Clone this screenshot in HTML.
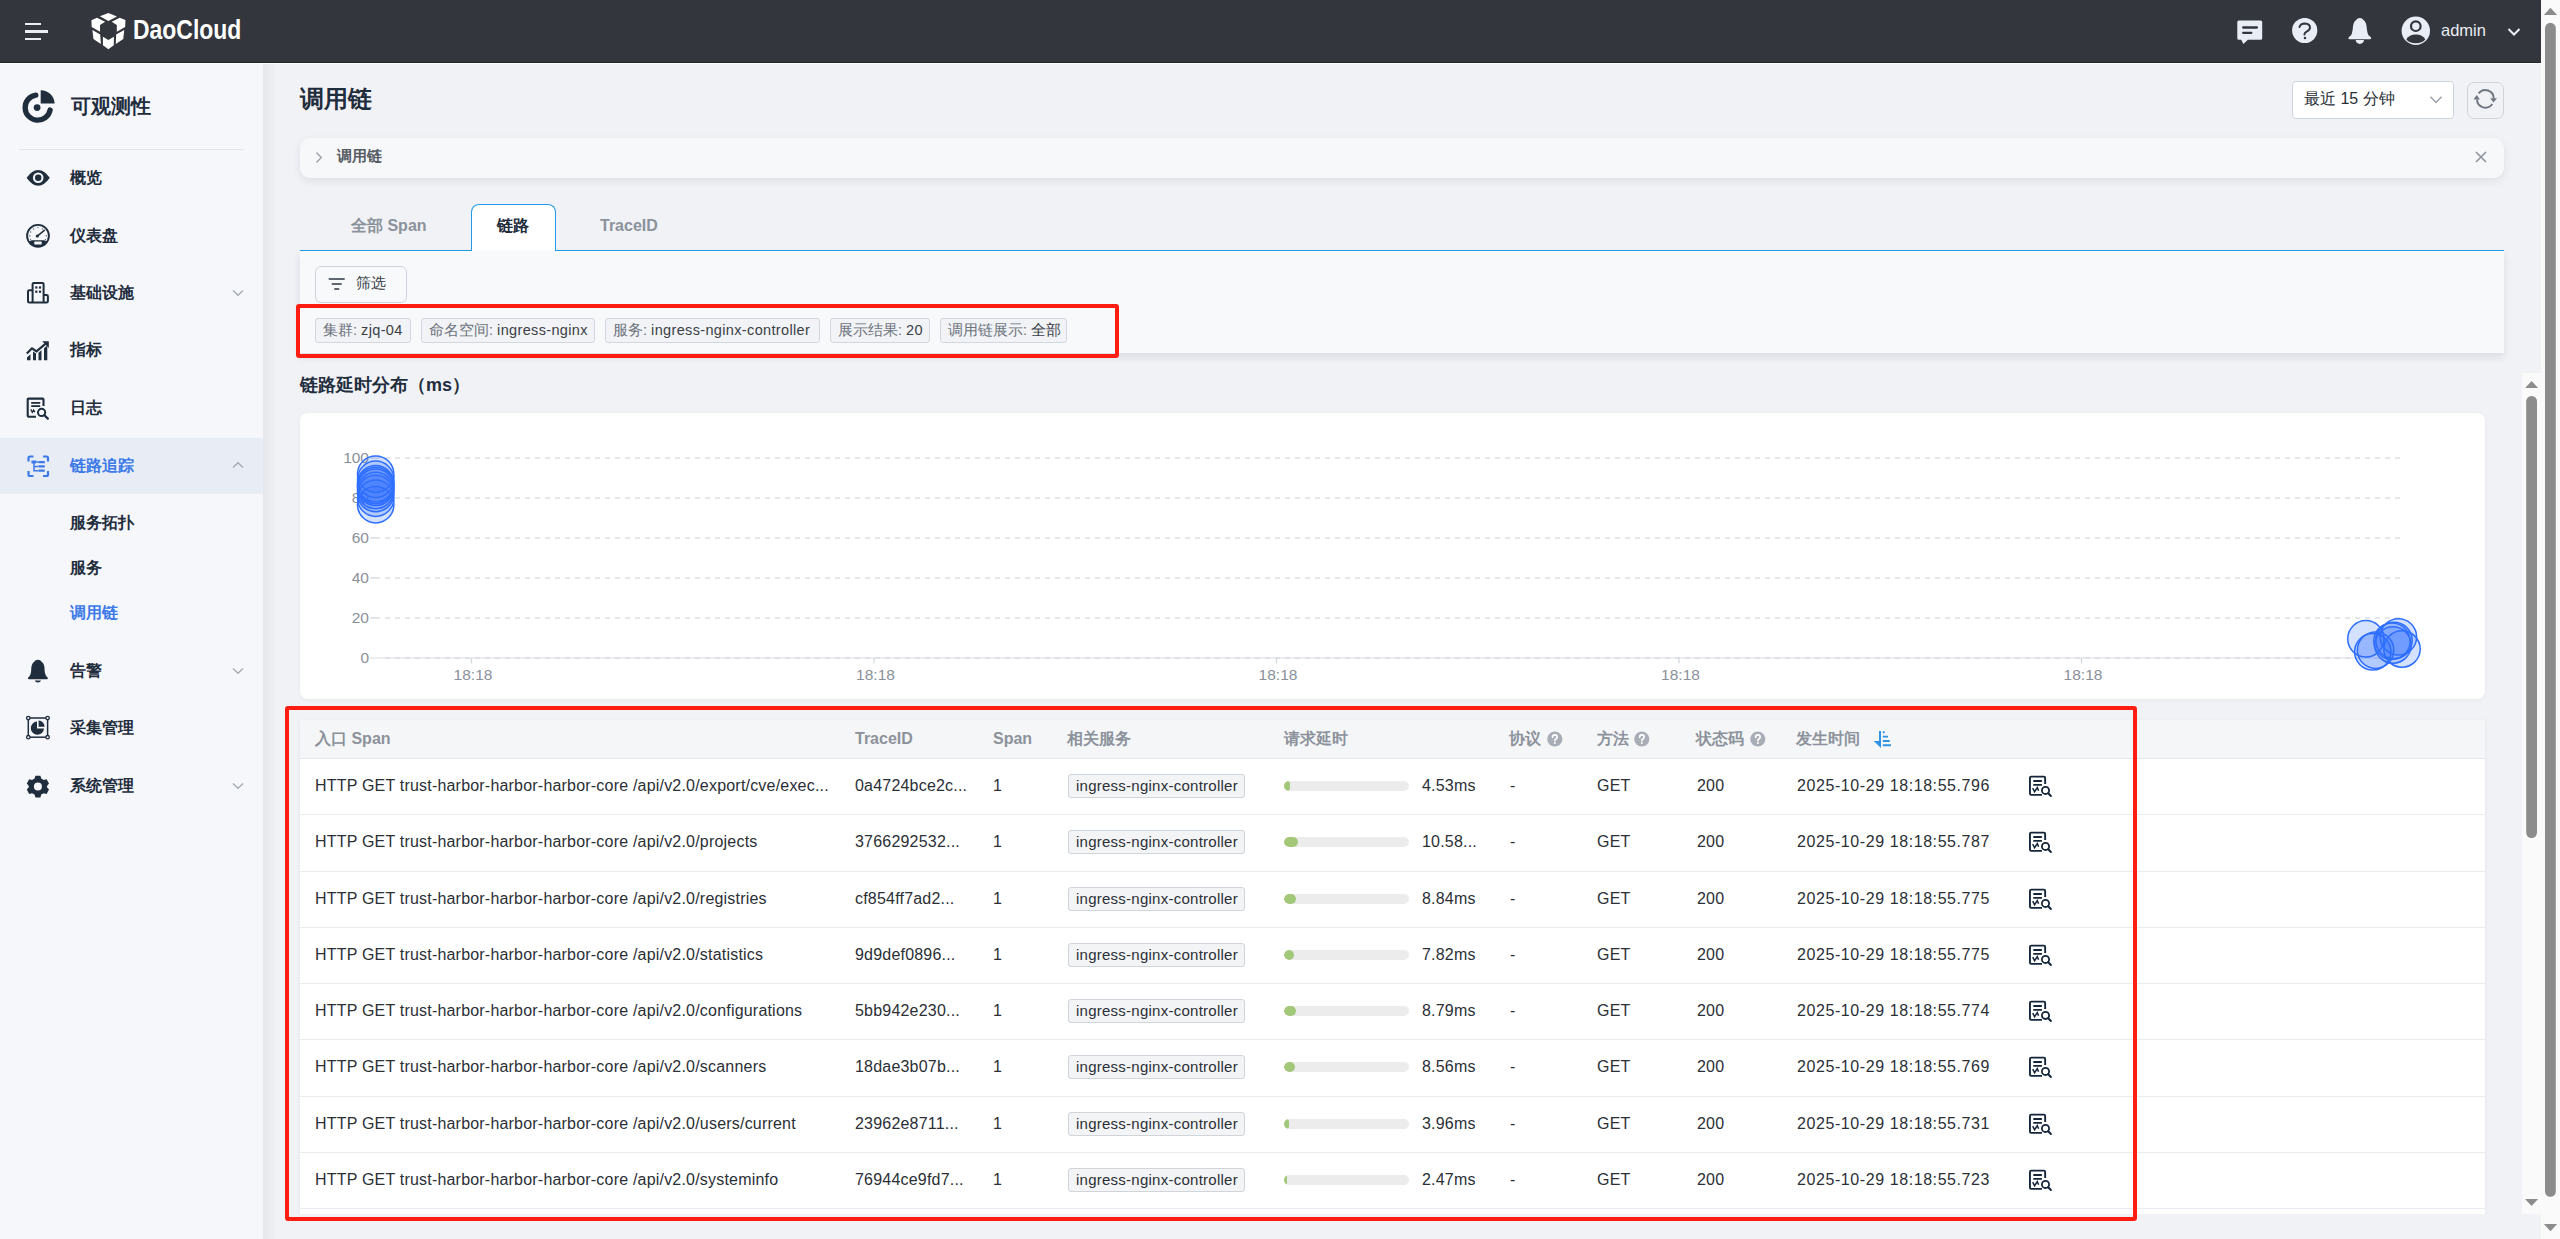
<!DOCTYPE html>
<html><head><meta charset="utf-8">
<style>
*{box-sizing:border-box;margin:0;padding:0}
html,body{width:2560px;height:1239px;overflow:hidden;background:#f1f2f6;font-family:"Liberation Sans",sans-serif;color:#2b2f36}
.a{position:absolute}
.nw{white-space:nowrap}
#top{left:0;top:0;width:2541px;height:63px;background:#33363c;border-bottom:1px solid #27292e}
#topw{left:0;top:63px;width:2541px;height:1px;background:#fdfdfe}
#side{left:0;top:64px;width:263px;height:1175px;background:#f6f7fb}
#sideshadow{left:263px;top:64px;width:14px;height:1177px;background:linear-gradient(90deg,rgba(0,0,0,0.045),rgba(0,0,0,0))}
.mi{left:70px;font-size:16px;font-weight:700;color:#1f2d3d;line-height:20px}
.ic{left:26px}
.chev{left:232px;width:12px;height:8px}
.tag{top:318px;height:25px;border:1px solid #d2d6dd;border-radius:3px;background:#f2f3f6;font-size:14.5px;line-height:23px;padding-left:7px;color:#6c727c}
.tag b{font-weight:400;color:#3a3f47;letter-spacing:0.35px}
.th{top:729px;font-size:16px;font-weight:700;color:#8c929b;line-height:20px}
.td{font-size:16px;color:#2b2f36;line-height:20px;letter-spacing:0.2px}
.dt{letter-spacing:0.58px}
.svc{width:177px;height:24px;border:1px solid #d0d4db;border-radius:3px;background:#f3f4f6;font-size:15px;line-height:22px;padding-left:7px;color:#2b2f36;letter-spacing:0.25px}
</style></head><body>
<!-- top bar -->
<div id="top" class="a">
  <div class="a" style="left:25px;top:23px;width:16px;height:2px;background:#e9edf5"></div>
  <div class="a" style="left:25px;top:30px;width:23px;height:2.5px;background:#e9edf5"></div>
  <div class="a" style="left:25px;top:38px;width:16px;height:2px;background:#e9edf5"></div>
  <svg class="a" style="left:88px;top:10px" width="42" height="42" viewBox="0 0 42 42">
    <g fill="#fff">
    <path d="M11.86 6.27 L20.34 2.88 L28.98 6.44 L20.34 11.02 Z"/>
    <path d="M3.39 10.17 L8.98 7.8 L17.12 11.69 L12.03 14.92 L12.03 21.86 L3.73 16.95 Z"/>
    <path d="M37.46 10 L31.69 7.8 L23.73 11.86 L28.81 15.08 L28.81 21.69 L37.12 16.95 Z"/>
    <path d="M4.41 20 L12.2 24.4 L12.88 34.07 L5.42 28.98 Z"/>
    <path d="M36.27 20 L28.14 24.4 L27.8 33.9 L35.25 28.98 Z"/>
    <path d="M14.92 26.78 L20.34 30 L25.93 26.78 L25.76 35.25 L20.34 39.32 L14.92 35.25 Z"/>
    </g>
  </svg>
  <div class="a nw" style="left:133px;top:15px;font-size:27px;font-weight:700;color:#fff;transform-origin:0 0;transform:scaleX(0.85);letter-spacing:0px">DaoCloud</div>
  <!-- right icons -->
  <svg class="a" style="left:2230px;top:12px" width="40" height="36" viewBox="0 0 40 36">
    <path fill="#e9edf5" d="M8.8 8.5 H30.6 Q32.2 8.5 32.2 10.1 V26.2 Q32.2 27.8 30.6 27.8 H17.9 L13.4 32 L11.2 27.8 H8.8 Q7.3 27.8 7.3 26.2 V10.1 Q7.3 8.5 8.8 8.5 Z"/>
    <path d="M13.2 15.5 H26.9 M13.2 20.8 H21.3" stroke="#32353b" stroke-width="2.3" stroke-linecap="round"/>
  </svg>
  <svg class="a" style="left:2292px;top:18px" width="26" height="26" viewBox="0 0 26 26">
    <circle cx="12.7" cy="12.5" r="12.6" fill="#e9edf5"/>
    <path d="M7.5 9 Q8.5 5.4 13 5.4 Q18 5.6 18 9.6 Q18 12 14.6 13.6 Q12.4 14.8 12.4 16.6" stroke="#32353b" stroke-width="2" fill="none" stroke-linecap="round"/>
    <circle cx="13" cy="19.9" r="1.25" fill="#32353b"/>
  </svg>
  <svg class="a" style="left:2345px;top:16px" width="30" height="30" viewBox="0 0 30 30">
    <path fill="#e9edf5" d="M14.8 1.9 Q17.3 1.9 18.4 4 Q21.1 5.6 21.6 10.5 Q22.1 16.9 23.5 19.2 Q26.5 21.6 26.3 22.3 Q26 23.2 25 23.2 H4.6 Q3.6 23.2 3.3 22.3 Q3.1 21.6 6.1 19.2 Q7.5 16.9 8 10.5 Q8.5 5.6 11.2 4 Q12.3 1.9 14.8 1.9 Z M10.7 24.1 H19 Q18.6 27.9 14.85 27.9 Q11.1 27.9 10.7 24.1 Z"/>
  </svg>
  <svg class="a" style="left:2401px;top:16px" width="30" height="30" viewBox="0 0 30 30">
    <circle cx="14.8" cy="14.8" r="14.2" fill="#e9edf5"/>
    <circle cx="14.8" cy="10.2" r="4.8" fill="none" stroke="#32353b" stroke-width="2.2"/>
    <path d="M5.3 23.5 Q8 18.5 14.8 18.5 Q21.6 18.5 24.3 23.5 Q21 27.3 14.8 27.3 Q8.6 27.3 5.3 23.5 Z" fill="#32353b"/>
  </svg>
  <div class="a nw" style="left:2441px;top:21px;font-size:16.5px;color:#e9edf5">admin</div>
  <svg class="a" style="left:2507px;top:27px" width="14" height="10" viewBox="0 0 14 10">
    <path d="M1.5 2 L7 7.5 L12.5 2" stroke="#e9edf5" stroke-width="2" fill="none"/>
  </svg>
</div>

<div id="topw" class="a"></div>
<!-- sidebar -->
<div id="side" class="a"></div>
<!-- obs logo -->
<svg class="a" style="left:20px;top:88px" width="38" height="38" viewBox="20 88 38 38">
  <path d="M50.1 110 A12.6 12.6 0 1 1 35.8 95.1" fill="none" stroke="#1f2d3d" stroke-width="5.3" stroke-linecap="round"/>
  <path d="M40.7 90.2 A13.8 13.8 0 0 1 54.6 103.6 L40.7 103.6 Z" fill="#1f2d3d"/>
  <circle cx="37.1" cy="107.6" r="3.4" fill="#1f2d3d"/>
</svg>
<div class="a nw" style="left:71px;top:94px;font-size:20px;font-weight:700;color:#1f2d3d;line-height:24px">可观测性</div>
<div class="a" style="left:19px;top:149px;width:225px;height:1px;background:#e2e5eb"></div>

<!-- eye -->
<svg class="a" style="left:26px;top:169px" width="25" height="18" viewBox="0 0 25 18">
  <path d="M0.6 8.8 Q6 0.9 12.2 0.9 Q18.4 0.9 23.8 8.8 Q18.4 16.7 12.2 16.7 Q6 16.7 0.6 8.8 Z" fill="#1f2d3d"/>
  <circle cx="12.2" cy="8.8" r="5.3" fill="#f5f6fa"/>
  <circle cx="12.2" cy="8.8" r="3.2" fill="#1f2d3d"/>
</svg>
<div class="a mi nw" style="top:168px">概览</div>

<!-- gauge -->
<svg class="a" style="left:25px;top:223px" width="26" height="26" viewBox="0 0 26 26">
  <circle cx="13" cy="12.8" r="10.9" fill="none" stroke="#1f2d3d" stroke-width="1.9"/>
  <path d="M4.3 19.3 Q5 17.2 7 17.2 H19 Q21 17.2 21.7 19.3 Q18.5 23.7 13 23.7 Q7.5 23.7 4.3 19.3 Z" fill="#1f2d3d"/>
  <rect x="9.3" y="18.6" width="7.4" height="3" rx="0.6" fill="#f5f6fa"/>
  <path d="M12 13.3 L19.3 7.3" stroke="#1f2d3d" stroke-width="1.5" stroke-linecap="round"/>
  <circle cx="12.3" cy="13" r="1.6" fill="#1f2d3d"/>
  <g fill="#1f2d3d" opacity="0.75"><circle cx="13" cy="4.6" r="0.7"/><circle cx="8.6" cy="5.9" r="0.7"/><circle cx="5.8" cy="9" r="0.7"/><circle cx="4.8" cy="12.8" r="0.7"/><circle cx="21.2" cy="12.8" r="0.7"/><circle cx="17.4" cy="5.9" r="0.7"/><circle cx="5.5" cy="16.3" r="0.6"/><circle cx="20.5" cy="16.3" r="0.6"/></g>
</svg>
<div class="a mi nw" style="top:226px">仪表盘</div>

<!-- building -->
<svg class="a" style="left:26px;top:281px" width="24" height="24" viewBox="0 0 24 24">
  <path d="M6.6 21.4 V3.1 Q6.6 1.9 7.8 1.9 H16.4 Q17.6 1.9 17.6 3.1 V21.4 M6.6 9.2 H3.3 Q2 9.2 2 10.5 V20.2 Q2 21.4 3.3 21.4 H20.6 Q21.9 21.4 21.9 20.2 V15.2 Q21.9 14 20.6 14 H17.6" fill="none" stroke="#1f2d3d" stroke-width="2"/>
  <rect x="9.2" y="5.4" width="2.2" height="2.2" fill="#1f2d3d"/><rect x="12.9" y="5.4" width="2.2" height="2.2" fill="#1f2d3d"/>
  <rect x="9.2" y="9.6" width="2.2" height="2.2" fill="#1f2d3d"/><rect x="12.9" y="9.6" width="2.2" height="2.2" fill="#1f2d3d"/>
</svg>
<div class="a mi nw" style="top:283px">基础设施</div>
<svg class="a chev" style="top:289px" viewBox="0 0 12 8"><path d="M1 1.5 L6 6.3 L11 1.5" fill="none" stroke="#a4aab3" stroke-width="1.3"/></svg>

<!-- metric -->
<svg class="a" style="left:26px;top:340px" width="24" height="22" viewBox="0 0 24 22">
  <path d="M0.8 13.6 L6 8.3 L10.5 11.3 L20 3.4" fill="none" stroke="#1f2d3d" stroke-width="2.2"/>
  <path d="M16.2 1.3 H22.8 V7.9 Z" fill="#1f2d3d"/>
  <path d="M1 20.3 L1 17.6 L4.5 14.2 V20.3 Z M7 20.3 V11.6 L10 13.6 V20.3 Z M12.5 20.3 V12.8 L15.5 10.3 V20.3 Z M18 20.3 V8.3 L21.3 5.5 V20.3 Z" fill="#1f2d3d"/>
</svg>
<div class="a mi nw" style="top:340px">指标</div>

<!-- log -->
<svg class="a" style="left:26px;top:397px" width="25" height="23" viewBox="0 0 25 23">
  <path d="M10 19.7 H2.6 Q1.7 19.7 1.7 18.8 V2.5 Q1.7 1.6 2.6 1.6 H16.6 Q17.5 1.6 17.5 2.5 V9" fill="none" stroke="#1f2d3d" stroke-width="2.1"/>
  <rect x="5.2" y="5" width="9" height="1.8" fill="#1f2d3d"/><rect x="5.2" y="8.2" width="9" height="1.8" fill="#1f2d3d"/>
  <path d="M4.8 12.3 L6.3 15.3 L7.6 13 L8.9 15.3" fill="none" stroke="#1f2d3d" stroke-width="1.3"/>
  <circle cx="15.6" cy="15.4" r="3.6" fill="none" stroke="#1f2d3d" stroke-width="2"/>
  <path d="M18.2 18 L21.8 21.6" stroke="#1f2d3d" stroke-width="2.2" stroke-linecap="round"/>
</svg>
<div class="a mi nw" style="top:398px">日志</div>

<!-- active trace -->
<div class="a" style="left:0;top:438px;width:263px;height:56px;background:#e8ecf4"></div>
<svg class="a" style="left:27px;top:455px" width="23" height="23" viewBox="0 0 23 23">
  <g fill="none" stroke="#3b7ae8" stroke-width="2.2">
  <path d="M1.5 6.5 V3 Q1.5 1.5 3 1.5 H6.5 M16 1.5 H19.5 Q21 1.5 21 3 V6.5 M21 16 V19.5 Q21 21 19.5 21 H16 M6.5 21 H3 Q1.5 21 1.5 19.5 V16"/>
  </g>
  <g fill="#3b7ae8">
  <rect x="4.4" y="5.6" width="5" height="2.8" rx="0.6"/>
  <rect x="11.5" y="6" width="6.3" height="2.2" rx="0.5"/>
  <rect x="11.5" y="10.3" width="6.3" height="2.2" rx="0.5"/>
  <rect x="11.5" y="14.6" width="6.3" height="2.2" rx="0.5"/>
  </g>
  <path d="M7 8 V15.7 H11.5 M7 11.4 H11.5 M9.4 7 H11.5" fill="none" stroke="#3b7ae8" stroke-width="1.5"/>
</svg>
<div class="a mi nw" style="top:456px;color:#3b7ae8">链路追踪</div>
<svg class="a chev" style="top:461px" viewBox="0 0 12 8"><path d="M1 6.5 L6 1.7 L11 6.5" fill="none" stroke="#a4aab3" stroke-width="1.3"/></svg>

<div class="a mi nw" style="top:513px">服务拓扑</div>
<div class="a mi nw" style="top:558px">服务</div>
<div class="a mi nw" style="top:603px;color:#3b7ae8">调用链</div>

<!-- bell -->
<svg class="a" style="left:26px;top:658px" width="24" height="26" viewBox="0 0 24 26">
  <path d="M11.9 1.7 Q14.6 1.7 15.6 3.8 Q18.6 6 18.6 11.7 Q18.6 17.2 21.6 19.4 Q22.5 20.8 21 21.3 H2.8 Q1.3 20.8 2.2 19.4 Q5.2 17.2 5.2 11.7 Q5.2 6 8.2 3.8 Q9.2 1.7 11.9 1.7 Z M8.8 22.5 H15 Q14.5 24.6 11.9 24.6 Q9.3 24.6 8.8 22.5 Z" fill="#1f2d3d"/>
</svg>
<div class="a mi nw" style="top:661px">告警</div>
<svg class="a chev" style="top:667px" viewBox="0 0 12 8"><path d="M1 1.5 L6 6.3 L11 1.5" fill="none" stroke="#a4aab3" stroke-width="1.3"/></svg>

<!-- collect -->
<svg class="a" style="left:25px;top:715px" width="26" height="26" viewBox="0 0 26 26">
  <rect x="3.3" y="3" width="19.3" height="19.2" fill="none" stroke="#1f2d3d" stroke-width="1.5"/>
  <g fill="#f5f6fa" stroke="#1f2d3d" stroke-width="1.3"><circle cx="3.3" cy="3" r="1.7"/><circle cx="22.6" cy="3" r="1.7"/><circle cx="3.3" cy="22.2" r="1.7"/><circle cx="22.6" cy="22.2" r="1.7"/></g>
  <path d="M12 6.5 A6.6 6.6 0 1 0 19 13.4 H12 Z" fill="#1f2d3d"/>
  <path d="M13.6 5.6 A6 6 0 0 1 19.6 11.7 H13.6 Z" fill="#1f2d3d"/>
</svg>
<div class="a mi nw" style="top:718px">采集管理</div>

<!-- gear -->
<svg class="a" style="left:26px;top:774px" width="24" height="24" viewBox="0 0 24 24">
  <path fill="#1f2d3d" fill-rule="evenodd" d="M9.4 1.8 H14.4 L15.2 4.6 L17.8 6 L20.6 5.3 L23 9.6 L21 11.9 V13.3 L23 15.6 L20.6 19.9 L17.8 19.2 L15.2 20.6 L14.4 23.4 H9.4 L8.6 20.6 L6 19.2 L3.2 19.9 L0.8 15.6 L2.8 13.3 V11.9 L0.8 9.6 L3.2 5.3 L6 6 L8.6 4.6 Z M11.9 8.6 A4 4 0 1 0 11.9 16.6 A4 4 0 1 0 11.9 8.6 Z"/>
</svg>
<div class="a mi nw" style="top:776px">系统管理</div>
<svg class="a chev" style="top:782px" viewBox="0 0 12 8"><path d="M1 1.5 L6 6.3 L11 1.5" fill="none" stroke="#a4aab3" stroke-width="1.3"/></svg>

<!-- main header -->
<div class="a nw" style="left:300px;top:84px;font-size:24px;font-weight:700;color:#1f2d3d;line-height:30px">调用链</div>
<div class="a" style="left:2292px;top:81px;width:162px;height:38px;background:#fff;border:1px solid #cfd3db;border-radius:4px"></div>
<div class="a nw" style="left:2304px;top:89px;font-size:16px;color:#2b2f36;line-height:20px">最近 15 分钟</div>
<svg class="a" style="left:2429px;top:95px" width="14" height="10" viewBox="0 0 14 10"><path d="M1.5 1.8 L7 7.5 L12.5 1.8" fill="none" stroke="#9aa0a9" stroke-width="1.4"/></svg>
<div class="a" style="left:2467px;top:82px;width:37px;height:37px;border:1px solid #cfd3db;border-radius:7px"></div>
<svg class="a" style="left:2465px;top:80px" width="42" height="42" viewBox="0 0 42 42">
  <path d="M13.6 13.4 A8.4 8.4 0 0 1 28.7 18.6" fill="none" stroke="#6f7680" stroke-width="1.9"/>
  <path d="M27.3 24 A8.4 8.4 0 0 1 12 19.6" fill="none" stroke="#6f7680" stroke-width="1.9"/>
  <path d="M25.2 18.3 H32 L28.5 22.5 Z" fill="#6f7680"/>
  <path d="M8.5 19.6 H14.9 L11.7 15.1 Z" fill="#6f7680"/>
</svg>

<!-- breadcrumb -->
<div class="a" style="left:300px;top:138px;width:2204px;height:40px;background:#f7f8fa;border-radius:10px;box-shadow:0 3px 9px rgba(30,40,60,0.09)"></div>
<svg class="a" style="left:314px;top:151px" width="10" height="13" viewBox="0 0 10 13"><path d="M2.5 1.5 L7.3 6.5 L2.5 11.5" fill="none" stroke="#9aa0a9" stroke-width="1.3"/></svg>
<div class="a nw" style="left:337px;top:147px;font-size:15px;font-weight:700;color:#575c64;line-height:18px">调用链</div>
<svg class="a" style="left:2474px;top:150px" width="14" height="14" viewBox="0 0 14 14"><path d="M2 2 L12 12 M12 2 L2 12" stroke="#8c929b" stroke-width="1.5"/></svg>

<!-- tabs -->
<div class="a" style="left:300px;top:250px;width:2204px;height:1px;background:#239ae9"></div>
<div class="a" style="left:471px;top:204px;width:85px;height:47px;background:#fff;border:1px solid #239ae9;border-bottom:none;border-radius:8px 8px 0 0"></div>
<div class="a nw" style="left:351px;top:216px;font-size:16px;font-weight:700;color:#8c929b;line-height:20px">全部 Span</div>
<div class="a nw" style="left:497px;top:216px;font-size:16px;font-weight:700;color:#1f2d3d;line-height:20px">链路</div>
<div class="a nw" style="left:600px;top:216px;font-size:16px;font-weight:700;color:#8c929b;line-height:20px">TraceID</div>

<!-- filter panel -->
<div class="a" style="left:300px;top:251px;width:2204px;height:102px;background:#f8f9fb;box-shadow:0 4px 8px rgba(20,30,50,0.10)"></div>
<div class="a" style="left:315px;top:266px;width:92px;height:37px;border:1px solid #cfd3db;border-radius:6px;background:#f8f9fb"></div>
<svg class="a" style="left:328px;top:276px" width="18" height="16" viewBox="0 0 18 16"><path d="M1.5 3 H16 M4.5 8 H13 M7 13 H10.5" stroke="#5f6670" stroke-width="1.9" stroke-linecap="round"/></svg>
<div class="a nw" style="left:356px;top:274px;font-size:15px;color:#3a3f47;line-height:18px">筛选</div>

<div class="a tag nw" style="left:315px;width:96px">集群: <b>zjq-04</b></div>
<div class="a tag nw" style="left:421px;width:174px">命名空间: <b>ingress-nginx</b></div>
<div class="a tag nw" style="left:605px;width:215px">服务: <b>ingress-nginx-controller</b></div>
<div class="a tag nw" style="left:830px;width:100px">展示结果: <b>20</b></div>
<div class="a tag nw" style="left:940px;width:127px">调用链展示: <b>全部</b></div>

<!-- annotations -->
<div class="a" style="left:296px;top:304px;width:823px;height:54px;border:4px solid #ff1d12;border-radius:3px"></div>

<!-- chart -->
<div class="a nw" style="left:300px;top:374px;font-size:18px;font-weight:700;color:#1f2d3d;line-height:22px">链路延时分布（ms）</div>
<div class="a" style="left:300px;top:413px;width:2185px;height:286px;background:#fff;border-radius:8px;box-shadow:0 1px 4px rgba(30,40,60,0.05)"></div>
<svg class="a" style="left:300px;top:413px" width="2185" height="286" viewBox="300 413 2185 286">
<g font-family="Liberation Sans" font-size="15.5" fill="#8a9099">
<path d="M370 458 H380" stroke="#dcdfe6" stroke-width="1.6"/><path d="M385 458 H2400" stroke="#dcdfe6" stroke-width="1.6" stroke-dasharray="5 5"/>
<text x="369" y="462.5" text-anchor="end">100</text>
<path d="M370 498 H380" stroke="#dcdfe6" stroke-width="1.6"/><path d="M385 498 H2400" stroke="#dcdfe6" stroke-width="1.6" stroke-dasharray="5 5"/>
<text x="369" y="502.5" text-anchor="end">80</text>
<path d="M370 538 H380" stroke="#dcdfe6" stroke-width="1.6"/><path d="M385 538 H2400" stroke="#dcdfe6" stroke-width="1.6" stroke-dasharray="5 5"/>
<text x="369" y="542.5" text-anchor="end">60</text>
<path d="M370 578 H380" stroke="#dcdfe6" stroke-width="1.6"/><path d="M385 578 H2400" stroke="#dcdfe6" stroke-width="1.6" stroke-dasharray="5 5"/>
<text x="369" y="582.5" text-anchor="end">40</text>
<path d="M370 618 H380" stroke="#dcdfe6" stroke-width="1.6"/><path d="M385 618 H2400" stroke="#dcdfe6" stroke-width="1.6" stroke-dasharray="5 5"/>
<text x="369" y="622.5" text-anchor="end">20</text>
<path d="M370 658 H2400" stroke="#e6e8ed" stroke-width="1.6"/><path d="M385 658 H2400" stroke="#d9dce3" stroke-width="1.6" stroke-dasharray="5 5"/>
<text x="369" y="662.5" text-anchor="end">0</text>
<path d="M471.5 658 V663.5" stroke="#d5d8df" stroke-width="1.3"/><text x="473.0" y="680" text-anchor="middle">18:18</text>
<path d="M874.0 658 V663.5" stroke="#d5d8df" stroke-width="1.3"/><text x="875.5" y="680" text-anchor="middle">18:18</text>
<path d="M1276.5 658 V663.5" stroke="#d5d8df" stroke-width="1.3"/><text x="1278.0" y="680" text-anchor="middle">18:18</text>
<path d="M1679.0 658 V663.5" stroke="#d5d8df" stroke-width="1.3"/><text x="1680.5" y="680" text-anchor="middle">18:18</text>
<path d="M2081.5 658 V663.5" stroke="#d5d8df" stroke-width="1.3"/><text x="2083.0" y="680" text-anchor="middle">18:18</text>

</g>
<g fill="rgba(45,110,255,0.2)" stroke="#2f6fff" stroke-width="1.5"><circle cx="375.7" cy="474.2" r="18.2"/><circle cx="375.7" cy="479.3" r="18.2"/><circle cx="375.7" cy="483.6" r="18.2"/><circle cx="375.7" cy="487.3" r="18.2"/><circle cx="375.7" cy="485.5" r="18.2"/><circle cx="375.7" cy="490.5" r="18.2"/><circle cx="375.7" cy="493.5" r="18.2"/><circle cx="375.7" cy="498.2" r="18.2"/><circle cx="375.7" cy="504.7" r="18.2"/><circle cx="2365.9" cy="638.8" r="18.2"/><circle cx="2372.8" cy="651.8" r="18.2"/><circle cx="2375.6" cy="650.2" r="18.2"/><circle cx="2391.9" cy="641.2" r="18.2"/><circle cx="2394" cy="640.5" r="18.2"/><circle cx="2398.4" cy="636.9" r="18.2"/><circle cx="2402" cy="649" r="18.2"/><circle cx="2393" cy="645" r="18.2"/></g>
</svg>

<!-- table -->
<div class="a" style="left:263px;top:373px;width:2259px;height:841px;overflow:hidden">
<div class="a" style="left:37px;top:347px;width:2185px;height:520px;background:#fff;box-shadow:0 1px 4px rgba(30,40,60,0.06)"></div>
</div>
<div class="a" style="left:300px;top:720px;width:2185px;height:39px;background:#f5f6f8;border-bottom:1px solid #e4e7ec"></div>
<div class="a th nw" style="left:315px">入口 Span</div>
<div class="a th nw" style="left:855px">TraceID</div>
<div class="a th nw" style="left:993px">Span</div>
<div class="a th nw" style="left:1067px">相关服务</div>
<div class="a th nw" style="left:1284px">请求延时</div>
<div class="a th nw" style="left:1509px">协议</div>
<div class="a th nw" style="left:1597px">方法</div>
<div class="a th nw" style="left:1696px">状态码</div>
<div class="a th nw" style="left:1796px">发生时间</div>
<svg class="a" style="left:1547px;top:731px" width="16" height="16" viewBox="0 0 16 16"><circle cx="7.8" cy="8" r="7.6" fill="#a9aeb6"/><path d="M5.6 6.3 Q5.6 3.9 7.9 3.9 Q10.2 3.9 10.2 6 Q10.2 7.2 8.8 8 Q7.9 8.6 7.9 9.6" fill="none" stroke="#fff" stroke-width="1.7" stroke-linecap="round"/><circle cx="7.9" cy="12" r="1" fill="#fff"/></svg>
<svg class="a" style="left:1634px;top:731px" width="16" height="16" viewBox="0 0 16 16"><circle cx="7.8" cy="8" r="7.6" fill="#a9aeb6"/><path d="M5.6 6.3 Q5.6 3.9 7.9 3.9 Q10.2 3.9 10.2 6 Q10.2 7.2 8.8 8 Q7.9 8.6 7.9 9.6" fill="none" stroke="#fff" stroke-width="1.7" stroke-linecap="round"/><circle cx="7.9" cy="12" r="1" fill="#fff"/></svg>
<svg class="a" style="left:1750px;top:731px" width="16" height="16" viewBox="0 0 16 16"><circle cx="7.8" cy="8" r="7.6" fill="#a9aeb6"/><path d="M5.6 6.3 Q5.6 3.9 7.9 3.9 Q10.2 3.9 10.2 6 Q10.2 7.2 8.8 8 Q7.9 8.6 7.9 9.6" fill="none" stroke="#fff" stroke-width="1.7" stroke-linecap="round"/><circle cx="7.9" cy="12" r="1" fill="#fff"/></svg>
<svg class="a" style="left:1870px;top:728px" width="24" height="22" viewBox="0 0 24 22"><path d="M9 3 H11 V19.9 L3.7 13 H9 Z" fill="#2f94e6"/><path d="M12.8 4.2 H14.7 M12.8 8.6 H18 M12.8 13 H19.7 M12.8 17.3 H21" stroke="#2f94e6" stroke-width="1.9"/></svg>
<div class="a" style="left:300px;top:814.25px;width:2185px;height:1px;background:#e9ebef"></div>
<div class="a td nw" style="left:315px;top:776.00px">HTTP GET trust-harbor-harbor-harbor-core /api/v2.0/export/cve/exec...</div>
<div class="a td nw" style="left:855px;top:776.00px">0a4724bce2c...</div>
<div class="a td nw" style="left:993px;top:776.00px">1</div>
<div class="a svc nw" style="left:1068px;top:774.00px">ingress-nginx-controller</div>
<div class="a" style="left:1284px;top:781.00px;width:125px;height:10px;border-radius:5px;background:#ececec;overflow:hidden"><div style="width:6px;height:10px;border-radius:5px;background:#a3c87a"></div></div>
<div class="a td nw" style="left:1422px;top:776.00px">4.53ms</div>
<div class="a td nw" style="left:1510px;top:776.00px">-</div>
<div class="a td nw" style="left:1597px;top:776.00px">GET</div>
<div class="a td nw" style="left:1697px;top:776.00px">200</div>
<div class="a td dt nw" style="left:1797px;top:776.00px">2025-10-29 18:18:55.796</div>
<svg class="a" style="left:2020px;top:770.00px" width="34" height="30" viewBox="0 0 34 30"><path d="M22 24.85 H11.2 Q9.95 24.85 9.95 23.6 V7.9 Q9.95 6.65 11.2 6.65 H23.9 Q25.15 6.65 25.15 7.9 V14" fill="none" stroke="#15263b" stroke-width="1.9"/><path d="M14 11 H21.2 M14 14.9 H21.2" stroke="#15263b" stroke-width="1.9" stroke-linecap="round"/><path d="M12.7 18.1 L14.6 21.7 L17.3 17.6 L18.6 20.7" fill="none" stroke="#15263b" stroke-width="1.5"/><circle cx="25.5" cy="20.4" r="3.6" fill="none" stroke="#15263b" stroke-width="1.8"/><path d="M28.2 23.2 L30.9 26" stroke="#15263b" stroke-width="2" stroke-linecap="round"/></svg>
<div class="a" style="left:300px;top:870.50px;width:2185px;height:1px;background:#e9ebef"></div>
<div class="a td nw" style="left:315px;top:832.25px">HTTP GET trust-harbor-harbor-harbor-core /api/v2.0/projects</div>
<div class="a td nw" style="left:855px;top:832.25px">3766292532...</div>
<div class="a td nw" style="left:993px;top:832.25px">1</div>
<div class="a svc nw" style="left:1068px;top:830.25px">ingress-nginx-controller</div>
<div class="a" style="left:1284px;top:837.25px;width:125px;height:10px;border-radius:5px;background:#ececec;overflow:hidden"><div style="width:14.2px;height:10px;border-radius:5px;background:#a3c87a"></div></div>
<div class="a td nw" style="left:1422px;top:832.25px">10.58...</div>
<div class="a td nw" style="left:1510px;top:832.25px">-</div>
<div class="a td nw" style="left:1597px;top:832.25px">GET</div>
<div class="a td nw" style="left:1697px;top:832.25px">200</div>
<div class="a td dt nw" style="left:1797px;top:832.25px">2025-10-29 18:18:55.787</div>
<svg class="a" style="left:2020px;top:826.25px" width="34" height="30" viewBox="0 0 34 30"><path d="M22 24.85 H11.2 Q9.95 24.85 9.95 23.6 V7.9 Q9.95 6.65 11.2 6.65 H23.9 Q25.15 6.65 25.15 7.9 V14" fill="none" stroke="#15263b" stroke-width="1.9"/><path d="M14 11 H21.2 M14 14.9 H21.2" stroke="#15263b" stroke-width="1.9" stroke-linecap="round"/><path d="M12.7 18.1 L14.6 21.7 L17.3 17.6 L18.6 20.7" fill="none" stroke="#15263b" stroke-width="1.5"/><circle cx="25.5" cy="20.4" r="3.6" fill="none" stroke="#15263b" stroke-width="1.8"/><path d="M28.2 23.2 L30.9 26" stroke="#15263b" stroke-width="2" stroke-linecap="round"/></svg>
<div class="a" style="left:300px;top:926.75px;width:2185px;height:1px;background:#e9ebef"></div>
<div class="a td nw" style="left:315px;top:888.50px">HTTP GET trust-harbor-harbor-harbor-core /api/v2.0/registries</div>
<div class="a td nw" style="left:855px;top:888.50px">cf854ff7ad2...</div>
<div class="a td nw" style="left:993px;top:888.50px">1</div>
<div class="a svc nw" style="left:1068px;top:886.50px">ingress-nginx-controller</div>
<div class="a" style="left:1284px;top:893.50px;width:125px;height:10px;border-radius:5px;background:#ececec;overflow:hidden"><div style="width:11.7px;height:10px;border-radius:5px;background:#a3c87a"></div></div>
<div class="a td nw" style="left:1422px;top:888.50px">8.84ms</div>
<div class="a td nw" style="left:1510px;top:888.50px">-</div>
<div class="a td nw" style="left:1597px;top:888.50px">GET</div>
<div class="a td nw" style="left:1697px;top:888.50px">200</div>
<div class="a td dt nw" style="left:1797px;top:888.50px">2025-10-29 18:18:55.775</div>
<svg class="a" style="left:2020px;top:882.50px" width="34" height="30" viewBox="0 0 34 30"><path d="M22 24.85 H11.2 Q9.95 24.85 9.95 23.6 V7.9 Q9.95 6.65 11.2 6.65 H23.9 Q25.15 6.65 25.15 7.9 V14" fill="none" stroke="#15263b" stroke-width="1.9"/><path d="M14 11 H21.2 M14 14.9 H21.2" stroke="#15263b" stroke-width="1.9" stroke-linecap="round"/><path d="M12.7 18.1 L14.6 21.7 L17.3 17.6 L18.6 20.7" fill="none" stroke="#15263b" stroke-width="1.5"/><circle cx="25.5" cy="20.4" r="3.6" fill="none" stroke="#15263b" stroke-width="1.8"/><path d="M28.2 23.2 L30.9 26" stroke="#15263b" stroke-width="2" stroke-linecap="round"/></svg>
<div class="a" style="left:300px;top:983.00px;width:2185px;height:1px;background:#e9ebef"></div>
<div class="a td nw" style="left:315px;top:944.75px">HTTP GET trust-harbor-harbor-harbor-core /api/v2.0/statistics</div>
<div class="a td nw" style="left:855px;top:944.75px">9d9def0896...</div>
<div class="a td nw" style="left:993px;top:944.75px">1</div>
<div class="a svc nw" style="left:1068px;top:942.75px">ingress-nginx-controller</div>
<div class="a" style="left:1284px;top:949.75px;width:125px;height:10px;border-radius:5px;background:#ececec;overflow:hidden"><div style="width:10px;height:10px;border-radius:5px;background:#a3c87a"></div></div>
<div class="a td nw" style="left:1422px;top:944.75px">7.82ms</div>
<div class="a td nw" style="left:1510px;top:944.75px">-</div>
<div class="a td nw" style="left:1597px;top:944.75px">GET</div>
<div class="a td nw" style="left:1697px;top:944.75px">200</div>
<div class="a td dt nw" style="left:1797px;top:944.75px">2025-10-29 18:18:55.775</div>
<svg class="a" style="left:2020px;top:938.75px" width="34" height="30" viewBox="0 0 34 30"><path d="M22 24.85 H11.2 Q9.95 24.85 9.95 23.6 V7.9 Q9.95 6.65 11.2 6.65 H23.9 Q25.15 6.65 25.15 7.9 V14" fill="none" stroke="#15263b" stroke-width="1.9"/><path d="M14 11 H21.2 M14 14.9 H21.2" stroke="#15263b" stroke-width="1.9" stroke-linecap="round"/><path d="M12.7 18.1 L14.6 21.7 L17.3 17.6 L18.6 20.7" fill="none" stroke="#15263b" stroke-width="1.5"/><circle cx="25.5" cy="20.4" r="3.6" fill="none" stroke="#15263b" stroke-width="1.8"/><path d="M28.2 23.2 L30.9 26" stroke="#15263b" stroke-width="2" stroke-linecap="round"/></svg>
<div class="a" style="left:300px;top:1039.25px;width:2185px;height:1px;background:#e9ebef"></div>
<div class="a td nw" style="left:315px;top:1001.00px">HTTP GET trust-harbor-harbor-harbor-core /api/v2.0/configurations</div>
<div class="a td nw" style="left:855px;top:1001.00px">5bb942e230...</div>
<div class="a td nw" style="left:993px;top:1001.00px">1</div>
<div class="a svc nw" style="left:1068px;top:999.00px">ingress-nginx-controller</div>
<div class="a" style="left:1284px;top:1006.00px;width:125px;height:10px;border-radius:5px;background:#ececec;overflow:hidden"><div style="width:11.7px;height:10px;border-radius:5px;background:#a3c87a"></div></div>
<div class="a td nw" style="left:1422px;top:1001.00px">8.79ms</div>
<div class="a td nw" style="left:1510px;top:1001.00px">-</div>
<div class="a td nw" style="left:1597px;top:1001.00px">GET</div>
<div class="a td nw" style="left:1697px;top:1001.00px">200</div>
<div class="a td dt nw" style="left:1797px;top:1001.00px">2025-10-29 18:18:55.774</div>
<svg class="a" style="left:2020px;top:995.00px" width="34" height="30" viewBox="0 0 34 30"><path d="M22 24.85 H11.2 Q9.95 24.85 9.95 23.6 V7.9 Q9.95 6.65 11.2 6.65 H23.9 Q25.15 6.65 25.15 7.9 V14" fill="none" stroke="#15263b" stroke-width="1.9"/><path d="M14 11 H21.2 M14 14.9 H21.2" stroke="#15263b" stroke-width="1.9" stroke-linecap="round"/><path d="M12.7 18.1 L14.6 21.7 L17.3 17.6 L18.6 20.7" fill="none" stroke="#15263b" stroke-width="1.5"/><circle cx="25.5" cy="20.4" r="3.6" fill="none" stroke="#15263b" stroke-width="1.8"/><path d="M28.2 23.2 L30.9 26" stroke="#15263b" stroke-width="2" stroke-linecap="round"/></svg>
<div class="a" style="left:300px;top:1095.50px;width:2185px;height:1px;background:#e9ebef"></div>
<div class="a td nw" style="left:315px;top:1057.25px">HTTP GET trust-harbor-harbor-harbor-core /api/v2.0/scanners</div>
<div class="a td nw" style="left:855px;top:1057.25px">18dae3b07b...</div>
<div class="a td nw" style="left:993px;top:1057.25px">1</div>
<div class="a svc nw" style="left:1068px;top:1055.25px">ingress-nginx-controller</div>
<div class="a" style="left:1284px;top:1062.25px;width:125px;height:10px;border-radius:5px;background:#ececec;overflow:hidden"><div style="width:10.6px;height:10px;border-radius:5px;background:#a3c87a"></div></div>
<div class="a td nw" style="left:1422px;top:1057.25px">8.56ms</div>
<div class="a td nw" style="left:1510px;top:1057.25px">-</div>
<div class="a td nw" style="left:1597px;top:1057.25px">GET</div>
<div class="a td nw" style="left:1697px;top:1057.25px">200</div>
<div class="a td dt nw" style="left:1797px;top:1057.25px">2025-10-29 18:18:55.769</div>
<svg class="a" style="left:2020px;top:1051.25px" width="34" height="30" viewBox="0 0 34 30"><path d="M22 24.85 H11.2 Q9.95 24.85 9.95 23.6 V7.9 Q9.95 6.65 11.2 6.65 H23.9 Q25.15 6.65 25.15 7.9 V14" fill="none" stroke="#15263b" stroke-width="1.9"/><path d="M14 11 H21.2 M14 14.9 H21.2" stroke="#15263b" stroke-width="1.9" stroke-linecap="round"/><path d="M12.7 18.1 L14.6 21.7 L17.3 17.6 L18.6 20.7" fill="none" stroke="#15263b" stroke-width="1.5"/><circle cx="25.5" cy="20.4" r="3.6" fill="none" stroke="#15263b" stroke-width="1.8"/><path d="M28.2 23.2 L30.9 26" stroke="#15263b" stroke-width="2" stroke-linecap="round"/></svg>
<div class="a" style="left:300px;top:1151.75px;width:2185px;height:1px;background:#e9ebef"></div>
<div class="a td nw" style="left:315px;top:1113.50px">HTTP GET trust-harbor-harbor-harbor-core /api/v2.0/users/current</div>
<div class="a td nw" style="left:855px;top:1113.50px">23962e8711...</div>
<div class="a td nw" style="left:993px;top:1113.50px">1</div>
<div class="a svc nw" style="left:1068px;top:1111.50px">ingress-nginx-controller</div>
<div class="a" style="left:1284px;top:1118.50px;width:125px;height:10px;border-radius:5px;background:#ececec;overflow:hidden"><div style="width:4.6px;height:10px;border-radius:5px;background:#a3c87a"></div></div>
<div class="a td nw" style="left:1422px;top:1113.50px">3.96ms</div>
<div class="a td nw" style="left:1510px;top:1113.50px">-</div>
<div class="a td nw" style="left:1597px;top:1113.50px">GET</div>
<div class="a td nw" style="left:1697px;top:1113.50px">200</div>
<div class="a td dt nw" style="left:1797px;top:1113.50px">2025-10-29 18:18:55.731</div>
<svg class="a" style="left:2020px;top:1107.50px" width="34" height="30" viewBox="0 0 34 30"><path d="M22 24.85 H11.2 Q9.95 24.85 9.95 23.6 V7.9 Q9.95 6.65 11.2 6.65 H23.9 Q25.15 6.65 25.15 7.9 V14" fill="none" stroke="#15263b" stroke-width="1.9"/><path d="M14 11 H21.2 M14 14.9 H21.2" stroke="#15263b" stroke-width="1.9" stroke-linecap="round"/><path d="M12.7 18.1 L14.6 21.7 L17.3 17.6 L18.6 20.7" fill="none" stroke="#15263b" stroke-width="1.5"/><circle cx="25.5" cy="20.4" r="3.6" fill="none" stroke="#15263b" stroke-width="1.8"/><path d="M28.2 23.2 L30.9 26" stroke="#15263b" stroke-width="2" stroke-linecap="round"/></svg>
<div class="a" style="left:300px;top:1208.00px;width:2185px;height:1px;background:#e9ebef"></div>
<div class="a td nw" style="left:315px;top:1169.75px">HTTP GET trust-harbor-harbor-harbor-core /api/v2.0/systeminfo</div>
<div class="a td nw" style="left:855px;top:1169.75px">76944ce9fd7...</div>
<div class="a td nw" style="left:993px;top:1169.75px">1</div>
<div class="a svc nw" style="left:1068px;top:1167.75px">ingress-nginx-controller</div>
<div class="a" style="left:1284px;top:1174.75px;width:125px;height:10px;border-radius:5px;background:#ececec;overflow:hidden"><div style="width:2.8px;height:10px;border-radius:5px;background:#a3c87a"></div></div>
<div class="a td nw" style="left:1422px;top:1169.75px">2.47ms</div>
<div class="a td nw" style="left:1510px;top:1169.75px">-</div>
<div class="a td nw" style="left:1597px;top:1169.75px">GET</div>
<div class="a td nw" style="left:1697px;top:1169.75px">200</div>
<div class="a td dt nw" style="left:1797px;top:1169.75px">2025-10-29 18:18:55.723</div>
<svg class="a" style="left:2020px;top:1163.75px" width="34" height="30" viewBox="0 0 34 30"><path d="M22 24.85 H11.2 Q9.95 24.85 9.95 23.6 V7.9 Q9.95 6.65 11.2 6.65 H23.9 Q25.15 6.65 25.15 7.9 V14" fill="none" stroke="#15263b" stroke-width="1.9"/><path d="M14 11 H21.2 M14 14.9 H21.2" stroke="#15263b" stroke-width="1.9" stroke-linecap="round"/><path d="M12.7 18.1 L14.6 21.7 L17.3 17.6 L18.6 20.7" fill="none" stroke="#15263b" stroke-width="1.5"/><circle cx="25.5" cy="20.4" r="3.6" fill="none" stroke="#15263b" stroke-width="1.8"/><path d="M28.2 23.2 L30.9 26" stroke="#15263b" stroke-width="2" stroke-linecap="round"/></svg>
<div class="a" style="left:263px;top:1214px;width:2278px;height:25px;background:#f1f2f6"></div>
<div class="a" style="left:285px;top:706px;width:1852px;height:515px;border:4px solid #ff1d12;border-radius:3px"></div>

<div id="sideshadow" class="a"></div>
<!-- scrollbars -->
<div class="a" style="left:2522px;top:373px;width:19px;height:841px;background:#fafafa"></div>
<svg class="a" style="left:2522px;top:373px" width="19" height="841" viewBox="0 0 19 841">
  <path d="M3.1 15 L9.6 7.9 L16.1 15 Z" fill="#8c8c8c"/>
  <rect x="4.2" y="23" width="10.8" height="442" rx="5.4" fill="#8c8c8c"/>
  <path d="M3.1 826 L9.6 833 L16.1 826 Z" fill="#8c8c8c"/>
</svg>
<div class="a" style="left:2541px;top:0;width:19px;height:1239px;background:#fafafa"></div>
<svg class="a" style="left:2541px;top:0" width="19" height="1239" viewBox="0 0 19 1239">
  <path d="M2.9 15 L9.5 7.75 L16.1 15 Z" fill="#8c8c8c"/>
  <rect x="4" y="22.8" width="10.8" height="1174" rx="5.4" fill="#8c8c8c"/>
  <path d="M2.9 1224 L9.5 1231.2 L16.1 1224 Z" fill="#8c8c8c"/>
</svg>

<!-- main placeholder -->
</body></html>
